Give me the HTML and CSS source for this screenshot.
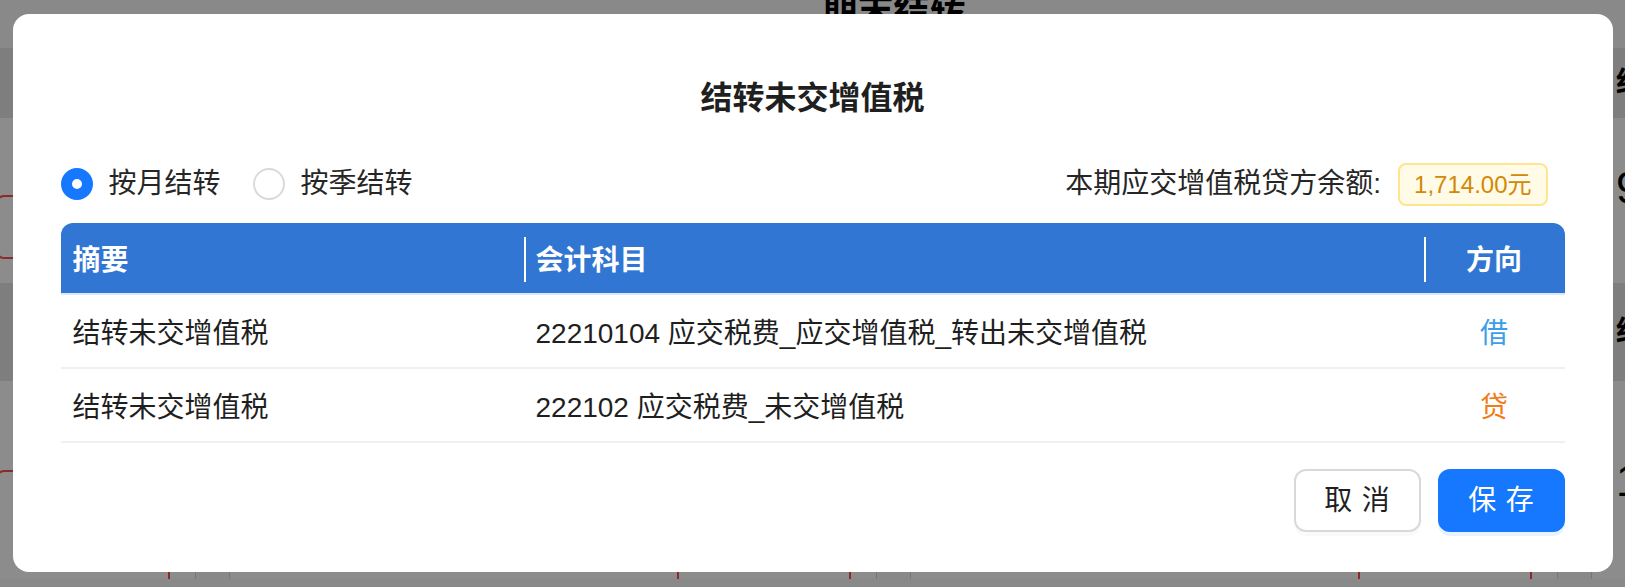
FILE: index.html
```html
<!DOCTYPE html>
<html lang="zh-CN">
<head>
  <meta charset="UTF-8">
  <meta name="viewport" content="width=device-width, initial-scale=1.0">
  <title>期末结转</title>
  <link rel="stylesheet" href="styles.css">
</head>
<body>
  <!-- page under the dialog -->
  <div class="page">
    <h1 class="page-title">期末结转</h1>
    <div class="cards">
      <div class="card">
        <div class="card-band">结转损益</div>
        <div class="card-body">
          <div class="card-num">0.00</div>
          <div class="card-btn"></div>
        </div>
        <div class="card-band tall">结转成本</div>
        <div class="card-body low">
          <div class="card-num">0.00</div>
          <div class="card-btn big"></div>
        </div>
      </div>
      <div class="card">
        <div class="card-band">结转未交增值税</div>
        <div class="card-body">
          <div class="card-num">1,714.00</div>
          <div class="card-btn"></div>
        </div>
        <div class="card-band tall">结转附加税</div>
        <div class="card-body low">
          <div class="card-num">0.00</div>
          <div class="card-btn big"></div>
        </div>
      </div>
      <div class="card">
        <div class="card-band">结转所得税</div>
        <div class="card-body">
          <div class="card-num">0.00</div>
          <div class="card-btn"></div>
        </div>
        <div class="card-band tall">结转汇兑损益</div>
        <div class="card-body low">
          <div class="card-num">0.00</div>
          <div class="card-btn big"></div>
        </div>
      </div>
      <div class="card">
        <div class="card-band">结转收入</div>
        <div class="card-body">
          <div class="card-num">9</div>
          <div class="card-btn"></div>
        </div>
        <div class="card-band tall">结转费用</div>
        <div class="card-body low">
          <div class="card-num">1</div>
          <div class="card-btn big"></div>
        </div>
      </div>
    </div>
  </div>

  <div class="mask"></div>

  <div class="modal-wrap">
    <div class="modal">
      <div class="modal-title">结转未交增值税</div>

      <div class="toolbar">
        <div class="radio-group">
          <label class="radio checked"><span class="radio-dot"></span>按月结转</label>
          <label class="radio"><span class="radio-dot"></span>按季结转</label>
        </div>
        <div class="balance">本期应交增值税贷方余额:<span class="tag">1,714.00元</span></div>
      </div>

      <table class="voucher">
        <colgroup>
          <col class="col-summary">
          <col class="col-subject">
          <col class="col-dir">
        </colgroup>
        <thead>
          <tr>
            <th>摘要</th>
            <th>会计科目</th>
            <th class="dir">方向</th>
          </tr>
        </thead>
        <tbody>
          <tr>
            <td>结转未交增值税</td>
            <td>22210104 应交税费_应交增值税_转出未交增值税</td>
            <td class="dir debit">借</td>
          </tr>
          <tr>
            <td>结转未交增值税</td>
            <td>222102 应交税费_未交增值税</td>
            <td class="dir credit">贷</td>
          </tr>
        </tbody>
      </table>

      <div class="footer">
        <button class="btn"><span>取消</span></button>
        <button class="btn primary"><span>保存</span></button>
      </div>
    </div>
  </div>
</body>
</html>
```

FILE: styles.css
```css
body {
  margin: 0;
  background-color: #fafafa;
  color: #1f1f1f;
  font-family: "Liberation Sans", "Noto Sans CJK SC", sans-serif;
  overflow: hidden;
}

/* background page */
.page {
  height: 100vh;
}

.page-title {
  margin: -8px 0 0;
  padding-left: 162px;
  text-align: center;
  font-size: 36px;
  line-height: 38px;
  font-weight: bold;
  color: #000;
}

.cards {
  display: flex;
  gap: 33px;
  margin-top: 18px;
  margin-left: -452px;
}

.card {
  flex: none;
  width: 646px;
  background: #fff;
  border-left: 1px solid #d9d9d9;
  border-right: 1px solid #d9d9d9;
}

.card-band {
  height: 70px;
  line-height: 70px;
  padding: 0 24px;
  background: #e6e6e6;
  font-size: 28px;
  font-weight: bold;
  color: #000;
}

.card-band.tall {
  height: 98px;
  line-height: 98px;
}

.card-body {
  display: flex;
  justify-content: space-between;
  align-items: flex-start;
  height: 165px;
  padding: 0 25px 0 24px;
}

.card-body.low {
  height: 220px;
}

.card-num {
  margin-top: 40px;
  font-size: 44px;
  line-height: 60px;
  color: #000;
}

.card-body.low .card-num {
  margin-top: 70px;
}

.card-btn {
  width: 174px;
  height: 64px;
  margin-top: 77px;
  border: 2px solid #ff4d4f;
  border-radius: 8px;
  box-sizing: border-box;
}

.card-btn.big {
  height: 130px;
  margin-top: 89px;
}

.mask {
  position: fixed;
  inset: 0;
  background: rgba(0, 0, 0, 0.45);
}

/* dialog */
.modal-wrap {
  position: fixed;
  inset: 0;
  display: flex;
  justify-content: center;
  align-items: flex-start;
  padding-top: 14px;
}

.modal {
  width: 1600px;
  box-sizing: border-box;
  padding: 62px 48px 40px;
  background: #fff;
  border-radius: 16px;
}

.modal-title {
  text-align: center;
  font-size: 32px;
  line-height: 44px;
  font-weight: bold;
  color: #1f1f1f;
}

.toolbar {
  display: flex;
  justify-content: space-between;
  align-items: center;
  margin-top: 42px;
  height: 44px;
}

.radio-group {
  display: flex;
  gap: 32px;
}

.radio {
  display: inline-flex;
  align-items: center;
  gap: 16px;
  font-size: 28px;
  line-height: 44px;
  color: #262626;
  cursor: pointer;
}

.radio-dot {
  width: 32px;
  height: 32px;
  box-sizing: border-box;
  border: 2px solid #d9d9d9;
  border-radius: 50%;
  background: #fff;
}

.radio.checked .radio-dot {
  border: 11px solid #1677ff;
}

.balance {
  display: flex;
  align-items: center;
  padding-right: 17px;
  font-size: 28px;
  line-height: 44px;
  color: #262626;
}

.tag {
  margin-left: 17px;
  padding: 0 14px;
  font-size: 24px;
  line-height: 39px;
  color: #d48806;
  background: #fffbe6;
  border: 2px solid #ffe58f;
  border-radius: 8px;
}

.voucher {
  width: 100%;
  margin-top: 17px;
  border-collapse: separate;
  border-spacing: 0;
  table-layout: fixed;
}

.col-summary { width: 463px; }
.col-subject { width: 900px; }
.col-dir { width: 141px; }

.voucher th {
  position: relative;
  height: 70px;
  padding: 0 12px;
  background: #3176d3;
  border-bottom: 2px solid #dce8f8;
  color: #fff;
  font-size: 28px;
  font-weight: bold;
  text-align: left;
}

.voucher th + th::before {
  content: "";
  position: absolute;
  left: 0;
  top: 14px;
  width: 2px;
  height: 45px;
  background: #fff;
}

.voucher th:first-child { border-top-left-radius: 12px; }
.voucher th:last-child { border-top-right-radius: 12px; }

.voucher td {
  height: 72px;
  padding: 0 12px;
  border-bottom: 2px solid #f0f0f0;
  font-size: 28px;
  color: #1f1f1f;
  white-space: nowrap;
}

.voucher .dir {
  text-align: center;
}

.voucher .debit { color: #3d9de8; }
.voucher .credit { color: #f07c1a; }

.footer {
  display: flex;
  justify-content: flex-end;
  gap: 17px;
  margin-top: 26px;
}

.btn {
  width: 127px;
  height: 63px;
  padding: 0;
  border: 2px solid #d9d9d9;
  border-radius: 12px;
  background: #fff;
  box-shadow: 0 4px 0 rgba(0, 0, 0, 0.02);
  color: #1f1f1f;
  font-family: inherit;
  font-size: 28px;
  line-height: 59px;
  cursor: pointer;
}

.btn span {
  letter-spacing: 0.34em;
  margin-right: -0.34em;
}

.btn.primary {
  background: #1677ff;
  border-color: #1677ff;
  color: #fff;
  box-shadow: 0 4px 0 rgba(5, 145, 255, 0.1);
}
```
